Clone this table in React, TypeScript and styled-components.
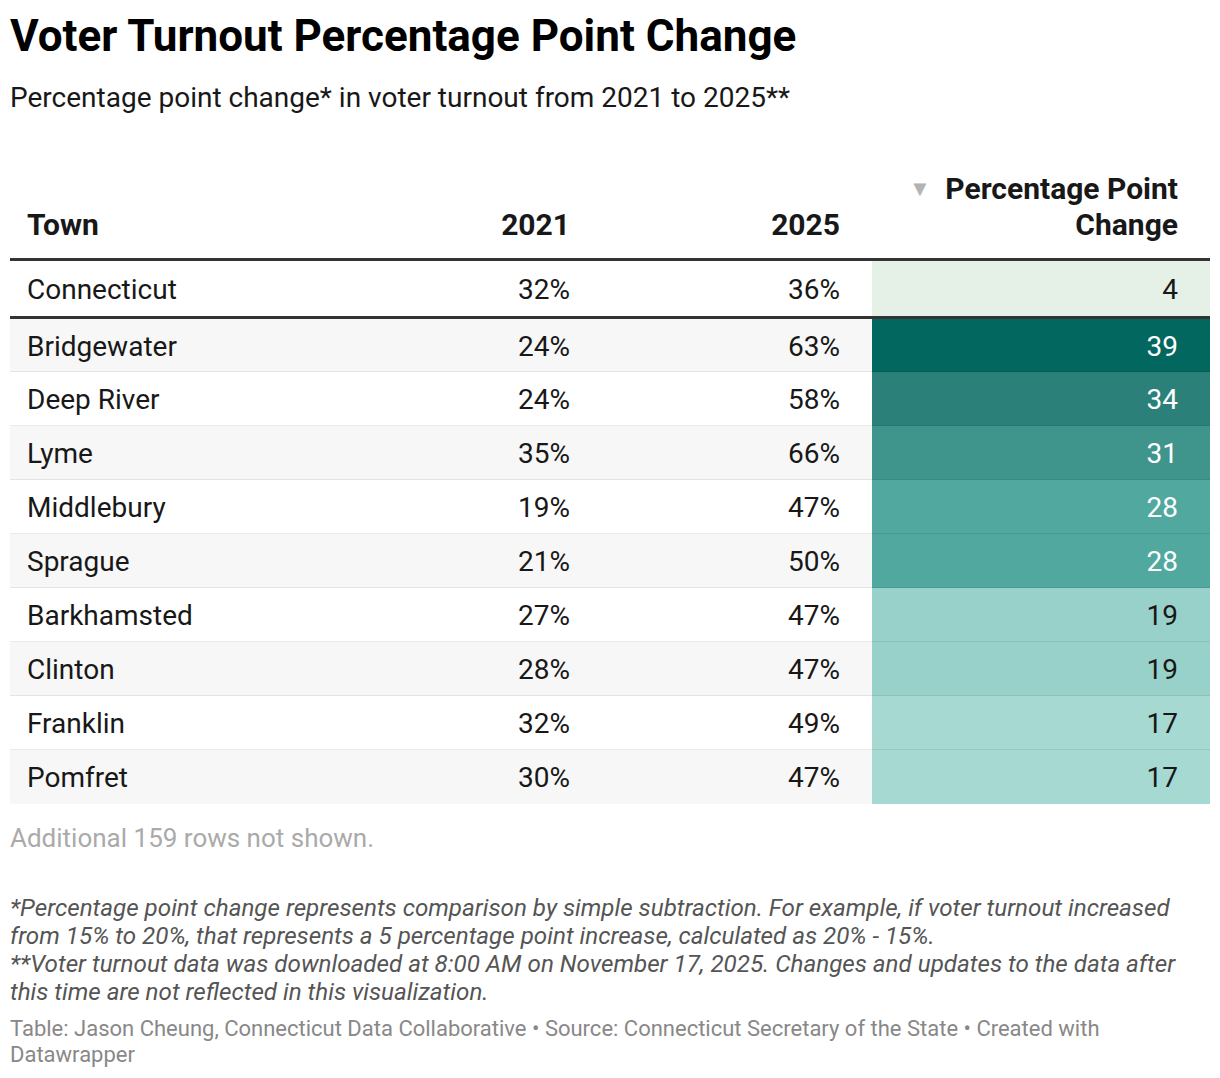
import React from "react";
import styled, { createGlobalStyle } from "styled-components";

interface Row {
  town: string;
  y2021: number;
  y2025: number;
  change: number;
}

const stateRow: Row = { town: "Connecticut", y2021: 32, y2025: 36, change: 4 };

// change values come from unrounded turnout, so they are stored as given
const rows: Row[] = [
  { town: "Bridgewater", y2021: 24, y2025: 63, change: 39 },
  { town: "Deep River", y2021: 24, y2025: 58, change: 34 },
  { town: "Lyme", y2021: 35, y2025: 66, change: 31 },
  { town: "Middlebury", y2021: 19, y2025: 47, change: 28 },
  { town: "Sprague", y2021: 21, y2025: 50, change: 28 },
  { town: "Barkhamsted", y2021: 27, y2025: 47, change: 19 },
  { town: "Clinton", y2021: 28, y2025: 47, change: 19 },
  { town: "Franklin", y2021: 32, y2025: 49, change: 17 },
  { town: "Pomfret", y2021: 30, y2025: 47, change: 17 },
];

// colour scale used by the change column
const scale: Record<number, string> = {
  4: "#e5f1e7",
  17: "#a6d9d2",
  19: "#98d1c9",
  28: "#50a89f",
  31: "#3f948b",
  34: "#2b8179",
  39: "#02675e",
};

const isDark = (v: number) => v >= 25;

const GlobalStyle = createGlobalStyle`
  *, *::before, *::after {
    box-sizing: border-box;
  }
  body {
    margin: 0;
    background: #fff;
    font-family: Roboto, "Liberation Sans", sans-serif;
    color: #181818;
  }
`;

export default function App() {
  return (
    <>
      <GlobalStyle />
      <Page>
        <Title>Voter Turnout Percentage Point Change</Title>
        <Subtitle>Percentage point change* in voter turnout from 2021 to 2025**</Subtitle>

        <Table>
          <colgroup>
            <col style={{ width: 322 }} />
            <col style={{ width: 270 }} />
            <col style={{ width: 270 }} />
            <col style={{ width: 338 }} />
          </colgroup>
          <thead>
            <tr>
              <HeadCell>Town</HeadCell>
              <HeadCell $num>2021</HeadCell>
              <HeadCell $num>2025</HeadCell>
              <HeadCell $num>
                <SortArrow>▼</SortArrow> Percentage Point Change
              </HeadCell>
            </tr>
          </thead>
          <tbody>
            <StateRow>
              <Cell>{stateRow.town}</Cell>
              <Cell $num>{stateRow.y2021}%</Cell>
              <Cell $num>{stateRow.y2025}%</Cell>
              <ChangeCell $bg={scale[stateRow.change]} $light={false}>
                {stateRow.change}
              </ChangeCell>
            </StateRow>
            {rows.map((r, i) => (
              <BodyRow key={r.town} $striped={i % 2 === 0}>
                <Cell>{r.town}</Cell>
                <Cell $num>{r.y2021}%</Cell>
                <Cell $num>{r.y2025}%</Cell>
                <ChangeCell $bg={scale[r.change]} $light={isDark(r.change)}>
                  {r.change}
                </ChangeCell>
              </BodyRow>
            ))}
          </tbody>
        </Table>

        <MoreRows>Additional 159 rows not shown.</MoreRows>

        <Notes>
          *Percentage point change represents comparison by simple subtraction. For example, if voter
          turnout increased from 15% to 20%, that represents a 5 percentage point increase, calculated
          as 20% - 15%.
          <br />
          **Voter turnout data was downloaded at 8:00 AM on November 17, 2025. Changes and updates to
          the data after this time are not reflected in this visualization.
        </Notes>

        <Footer>
          Table: Jason Cheung, Connecticut Data Collaborative • Source: Connecticut Secretary of the
          State • Created with Datawrapper
        </Footer>
      </Page>
    </>
  );
}

const Page = styled.div`
  width: 1220px;
  padding: 8px 10px 10px;
`;

const Title = styled.h1`
  margin: 0;
  font-size: 44px;
  line-height: 56px;
  font-weight: 700;
  color: #000;
`;

const Subtitle = styled.p`
  margin: 16px 0 0;
  font-size: 28px;
  line-height: 36px;
  color: #181818;
`;

const Table = styled.table`
  width: 1200px;
  margin-top: 55px;
  border-collapse: collapse;
  table-layout: fixed;
`;

const HeadCell = styled.th<{ $num?: boolean }>`
  padding: 0 32px 15px 17px;
  text-align: ${(p) => (p.$num ? "right" : "left")};
  vertical-align: bottom;
  font-size: 30px;
  line-height: 36px;
  font-weight: 700;
  color: #181818;
  border-bottom: 3px solid #333;

  &:last-child {
    padding-left: 0;
  }
`;

const SortArrow = styled.span`
  color: #b3b3b3;
  font-size: 22px;
  vertical-align: 3px;
  margin-right: 7px;
`;

const StateRow = styled.tr`
  td {
    height: 58px;
    padding-top: 3px;
    border-bottom: 3px solid #333;
  }
`;

const BodyRow = styled.tr<{ $striped: boolean }>`
  background: ${(p) => (p.$striped ? "#f7f7f7" : "#fff")};

  td {
    height: 54px;
    border-bottom: 1px solid rgba(0, 0, 0, 0.08);
  }

  &:last-child td {
    border-bottom: none;
  }
`;

const Cell = styled.td<{ $num?: boolean }>`
  padding: 3px 32px 0 17px;
  text-align: ${(p) => (p.$num ? "right" : "left")};
  font-size: 28px;
  line-height: 36px;
  color: #181818;
`;

const ChangeCell = styled.td<{ $bg: string; $light: boolean }>`
  padding: 3px 32px 0 0;
  text-align: right;
  font-size: 28px;
  line-height: 36px;
  background: ${(p) => p.$bg};
  color: ${(p) => (p.$light ? "#fff" : "#181818")};
`;

const MoreRows = styled.p`
  margin: 18px 0 0;
  font-size: 26px;
  line-height: 32px;
  color: #aaa;
`;

const Notes = styled.p`
  margin: 40px 0 0;
  font-size: 24.2px;
  line-height: 28px;
  font-style: italic;
  color: #555;
`;

const Footer = styled.p`
  margin: 10px 0 0;
  font-size: 22px;
  line-height: 26px;
  color: #888;
`;
